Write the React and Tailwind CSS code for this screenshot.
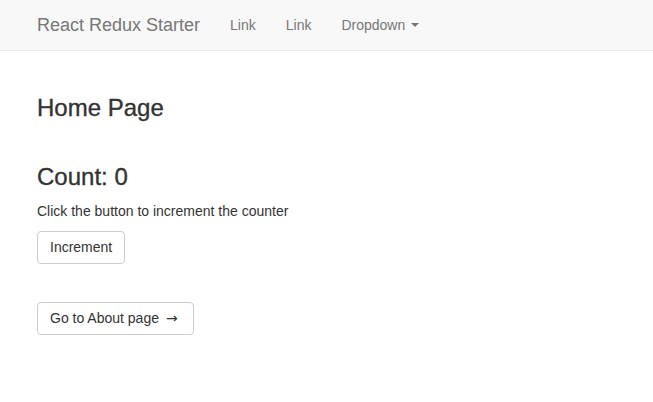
export default function App() {
  return (
    <div className="min-h-[402px] bg-white text-[14px] text-[#333]" style={{ fontFamily: '"Liberation Sans", Arial, sans-serif' }}>
      <nav className="h-[51px] bg-[#f8f8f8] border-b border-[#e7e7e7] flex items-center">
        <div className="flex items-center pl-[22px]">
          <a className="px-[15px] text-[18px] leading-[20px] text-[#777]">React Redux Starter</a>
          <a className="px-[15px] leading-[20px] text-[#777]">Link</a>
          <a className="px-[15px] leading-[20px] text-[#777]">Link</a>
          <a className="px-[15px] leading-[20px] text-[#777] flex items-center">
            Dropdown
            <span className="ml-[6px] inline-block w-0 h-0 border-x-[4px] border-x-transparent border-t-[4px] border-t-[#777]"></span>
          </a>
        </div>
      </nav>
      <div className="px-[37px] pt-[20px]">
        <h3 className="mt-[24px] mb-[10px] text-[24px] leading-[26.4px] [-webkit-text-stroke:0.35px_#333]">Home Page</h3>
        <div className="mt-[43px]">
          <h3 className="mt-[0px] mb-[10px] text-[24px] leading-[26.4px] [-webkit-text-stroke:0.35px_#333]">Count: 0</h3>
          <p className="mb-[10px] leading-[20px]">Click the button to increment the counter</p>
          <button className="h-[33px] px-[12px] border border-[#ccc] rounded-[4px] bg-white text-[14px] leading-[20px] text-[#333]">Increment</button>
        </div>
        <div className="mt-[38px]">
          <button className="h-[33px] pl-[12px] pr-[13px] border border-[#ccc] rounded-[4px] bg-white text-[14px] leading-[20px] text-[#333] inline-flex items-center">
            <span>Go to About page</span>
            <span style={{ fontFamily: '"DejaVu Sans", sans-serif' }} className="ml-[7px] w-[14px] inline-block text-left text-[14px] leading-[20px]">→</span>
          </button>
        </div>
      </div>
    </div>
  );
}
